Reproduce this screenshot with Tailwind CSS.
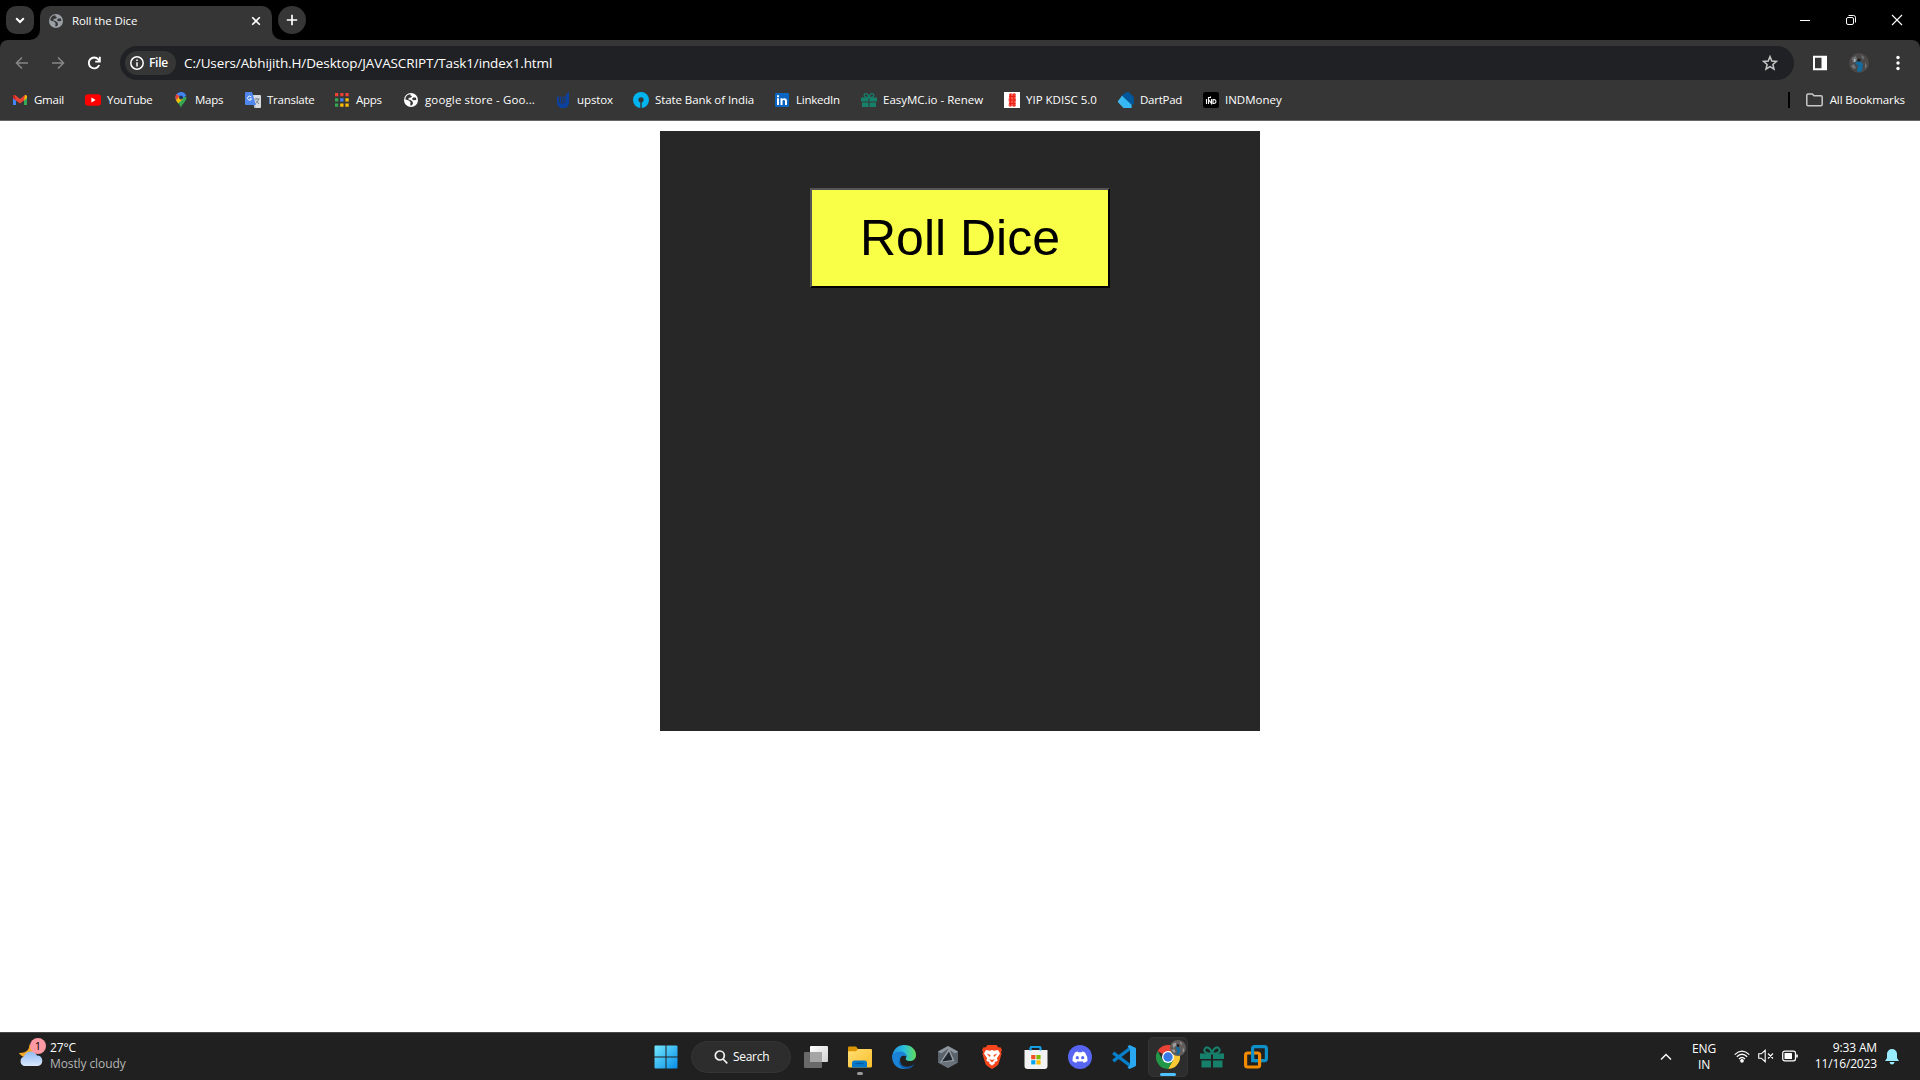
<!DOCTYPE html>
<html lang="en">
<head>
<meta charset="utf-8">
<title>Roll the Dice</title>
<script src="https://cdn.jsdelivr.net/npm/@tailwindcss/browser@4"></script>
</head>
<body class="w-[1920px] h-[1080px] overflow-hidden bg-white flex flex-col font-['Open_Sans','Noto_Sans',sans-serif] text-white whitespace-nowrap">

<!-- Tab strip -->
<header class="h-10 shrink-0 bg-black flex">
  <div class="w-10 pl-1.5 pt-1.5 shrink-0">
    <div class="size-7 rounded-[10px] bg-[#363636] flex items-center justify-center">
      <svg class="size-3" viewBox="0 0 12 12" fill="none" stroke="#fff" stroke-width="2"><path d="M2.2 4.2 6 8l3.800-3.800"/></svg>
    </div>
  </div>
  <div class="relative mt-1.5 w-[232px] h-[34px] bg-[#363636] rounded-t-[10px] flex items-center pb-1 pl-2">
    <svg class="absolute -left-2.5 bottom-0 size-2.5" viewBox="0 0 10 10"><path d="M10 0V10H0A10 10 0 0 0 10 0" fill="#363636"/></svg>
    <svg class="absolute -right-2.5 bottom-0 size-2.5" viewBox="0 0 10 10"><path d="M0 0V10H10A10 10 0 0 1 0 0" fill="#363636"/></svg>
    <svg class="size-4" viewBox="0 0 16 16"><circle cx="8" cy="8" r="7" fill="#9aa0a6"/><path d="M7.500 2.300C4 2.500 2.300 5 2.500 7.500L6 8.500 7.500 10 7.300 13.500 9 13.300 10 11.500 9.500 9.500 7.500 8 5.500 7.500 5.600 6 8 5.500 9 4.200 7.500 3.500ZM10.200 5.500 8.800 7 10.500 8.300 13.400 8 12.800 5.500Z" fill="#363636"/></svg>
    <span class="ml-2 text-[11.500px] tracking-[-0.1px] w-[178px]">Roll the Dice</span>
    <svg class="size-3" viewBox="0 0 12 12" stroke="#fff" stroke-width="1.600"><path d="m2.200 2.200 7.600 7.600m0-7.600L2.200 9.800"/></svg>
  </div>
  <div class="ml-1.5 mt-1.5 size-7 rounded-full bg-[#363636] flex items-center justify-center">
    <svg class="size-3" viewBox="0 0 12 12" stroke="#fff" stroke-width="1.700"><path d="M6 .8v10.400M.8 6h10.400"/></svg>
  </div>
  <div class="ml-auto flex w-[138px]">
    <div class="w-[46px] flex items-center justify-center"><svg class="w-2.5 h-10" viewBox="0 0 10 40" stroke="#fff"><path d="M0 20.500h10"/></svg></div>
    <div class="w-[46px] flex items-center justify-center"><svg class="size-3" viewBox="0 0 12 12" fill="none" stroke="#fff"><rect x="1.500" y="3.500" width="7" height="7" rx="1.500"/><path d="M3.500 1.500h5a2 2 0 0 1 2 2v5"/></svg></div>
    <div class="w-[46px] flex items-center justify-center"><svg class="size-3" viewBox="0 0 12 12" stroke="#fff" stroke-width="1.100"><path d="m1 1 10 10m0-10L1 11"/></svg></div>
  </div>
</header>

<!-- Toolbar and bookmarks -->
<div class="bg-black shrink-0">
<div class="h-[81px] bg-[#363636] rounded-t-[8px] border-b border-[#666] flex flex-col">
  <div class="h-[46px] flex items-center">
    <svg class="ml-[15px] size-3.5" viewBox="0 0 14 14" fill="none" stroke="#868686" stroke-width="1.600"><path d="M13 7H1.800M7 1.500 1.500 7 7 12.500"/></svg>
    <svg class="ml-[22px] size-3.5" viewBox="0 0 14 14" fill="none" stroke="#868686" stroke-width="1.600"><path d="M1 7h11.200M7 1.500 12.500 7 7 12.500"/></svg>
    <svg class="ml-[22px] size-3.5" viewBox="0 0 14 14" fill="none" stroke="#fff" stroke-width="1.900"><path d="M12.200 9A5.400 5.400 0 1 1 11.300 3.400L12.500 5"/><path d="M12.800.8v4.800H8.200" /></svg>
    <div class="ml-[19px] w-[1674px] h-[34px] rounded-full bg-[#202124] flex items-center pl-[5px] pr-4">
      <div class="w-[51px] h-6 rounded-full bg-[#363636] flex items-center pl-[5px]">
        <svg class="size-3.5" viewBox="0 0 14 14" fill="none" stroke="#fff" stroke-width="1.500"><circle cx="7" cy="7" r="6.200"/><path d="M7 6.200v4.200M7 3.500v1.500"/></svg>
        <span class="ml-[5px] text-[12px] font-semibold tracking-[-0.3px]">File</span>
      </div>
      <span class="ml-2 text-[13.500px] tracking-[-0.12px]">C:/Users/Abhijith.H/Desktop/JAVASCRIPT/Task1/index1.html</span>
      <svg class="ml-auto size-4" viewBox="0 0 16 16" fill="none" stroke="#c7c7c7" stroke-width="1.500"><path d="m8 1.600 1.800 4.400 4.700.4-3.600 3.100 1.100 4.600L8 11.600l-4 2.500 1.100-4.600L1.500 6.400 6.200 6Z"/></svg>
    </div>
    <svg class="ml-[19px] w-3.5 h-4" viewBox="0 0 14 16"><path d="M1 1.800h12v12.400H1Z" fill="none" stroke="#fff" stroke-width="2"/><path d="M8.500 1h5v14h-5Z" fill="#fff"/></svg>
    <svg class="ml-[22px] size-5" viewBox="0 0 20 20"><circle cx="10" cy="10" r="10" fill="#4b4847"/><path d="M3 5 7 3l1 4-4 3Zm9-3 3 2-1 3Zm-7 9 2 4-2 1-3-3Zm11-2 2 4-2 3Z" fill="#70767a"/><path d="m7 9 4-1 3 3-1 7-3 1-2-1 1-6-3-1Z" fill="#146a9d"/><circle cx="10" cy="7" r="1.600" fill="#1c1a1d"/><path d="M5 6h1.500v3H5Z" fill="#a8b5bd"/></svg>
    <svg class="ml-[27px] w-1 h-4" viewBox="0 0 4 16" fill="#fff"><circle cx="2" cy="2.500" r="1.700"/><circle cx="2" cy="8" r="1.700"/><circle cx="2" cy="13.500" r="1.700"/></svg>
  </div>
  <nav class="h-[28px] flex items-center pl-3 text-[11.500px] tracking-[-0.25px] leading-4">
    <div class="w-[73px] flex items-center gap-1.5"><svg class="size-4" viewBox="0 0 16 16"><path d="M1 4v9h3V7Z" fill="#4285f4"/><path d="M15 4v9h-3V7Z" fill="#34a853"/><path d="M12 4.500 13 3q2-.5 2 1.500V6l-3 2.500Z" fill="#fbbc04"/><path d="M1 6V4.500Q1 2.500 3 3l5 4 5-4-1 5.500-4 3-4-3Z" fill="#ea4335"/><path d="M1 6V4.500Q1 3 2.500 3L4 8.500Z" fill="#c5221f"/></svg>Gmail</div>
    <div class="w-[88px] flex items-center gap-1.5"><svg class="size-4" viewBox="0 0 16 16"><rect y="2.300" width="16" height="11.500" rx="2.800" fill="#f00"/><path d="m6.400 5.600 4.200 2.400-4.200 2.400Z" fill="#fff"/></svg>YouTube</div>
    <div class="w-[72px] flex items-center gap-1.5"><svg class="size-4" viewBox="0 0 16 16"><path d="M8 16C7.500 12.500 2.500 10 2.500 5.500L13.500 5c0 5-5 7-5.500 11Z" fill="#34a853"/><path d="M8 0a5.500 5.500 0 0 1 5.200 3.800L4.500 10Q2.500 7.500 2.500 5.500A5.500 5.500 0 0 1 8 0Z" fill="#4285f4"/><path d="M3.700 2 7 4.500 3 8.200Q1.500 4.500 3.700 2Z" fill="#ea4335"/><path d="m3 8.200 3.200-3.700L10 7l-4.800 4.200Z" fill="#fbbc04"/><circle cx="8" cy="5.500" r="2" fill="#1b3460"/></svg>Maps</div>
    <div class="w-[89px] flex items-center gap-1.5"><svg class="size-4" viewBox="0 0 16 16"><path d="M6 3h9q1 0 1 1v11q0 1-1 1H9.500Z" fill="#d7dade"/><path d="M1 0h6l4 13H1q-1 0-1-1V1q0-1 1-1Z" fill="#4f87ee"/><path d="M6.200 5A2 2 0 1 0 6.500 6.800H4.700" fill="none" stroke="#fff"/><path d="m9.500 13 1.500 3-2-3Z" fill="#2458b8"/><path d="M9.500 7h5M12 6v1m1.500 0c0 2-2 4-3 4.500m.5-3 3 3.500" fill="none" stroke="#75838b"/></svg>Translate</div>
    <div class="w-[69px] flex items-center gap-1.5"><svg class="size-4" viewBox="0 0 16 16"><path d="M1 1h3.300v3.300H1ZM6.200 1h3.300v3.300H6.200ZM11.400 1h3.300v3.300h-3.300Z" fill="#ea4335"/><path d="M1 6.200h3.300v3.300H1ZM1 11.400h3.300v3.300H1Z" fill="#34a853"/><path d="M6.200 6.200h3.300v3.300H6.200Z" fill="#4285f4"/><path d="M11.400 6.200h3.300v3.300h-3.300ZM6.200 11.400h3.300v3.300H6.200ZM11.400 11.400h3.300v3.300H11.400Z" fill="#fbbc04"/></svg>Apps</div>
    <div class="w-[152px] flex items-center gap-1.5 tracking-[0.13px]"><svg class="size-4" viewBox="0 0 16 16"><circle cx="8" cy="8" r="7" fill="#fff"/><path d="M7.500 2.300C4 2.500 2.300 5 2.500 7.500L6 8.500 7.500 10 7.300 13.500 9 13.300 10 11.500 9.500 9.500 7.500 8 5.500 7.500 5.600 6 8 5.500 9 4.200 7.500 3.500ZM10.200 5.500 8.800 7 10.500 8.300 13.400 8 12.800 5.500Z" fill="#363636"/></svg>google store - Goo...</div>
    <div class="w-[78px] flex items-center gap-1.5 tracking-[-0.1px]"><svg class="size-4" viewBox="0 0 16 16"><path d="M2 4.500h2V10a3.800 3.800 0 0 0 7 0V2l3-2v10.500a6 6 0 0 1-12 0Z" fill="#0d41a0"/><path d="M5.500 4.500V10a2.300 2.300 0 0 0 4.500 0V4M7.800 4.500V10" fill="none" stroke="#0d41a0" stroke-width="1.200"/></svg>upstox</div>
    <div class="w-[141px] flex items-center gap-1.5 tracking-[-0.08px]"><svg class="size-4" viewBox="0 0 16 16"><circle cx="8" cy="8" r="8" fill="#00b5ef"/><circle cx="8" cy="7.800" r="2.600" fill="#363636"/><path d="M7.300 8h1.400v8H7.300Z" fill="#363636"/></svg>State Bank of India</div>
    <div class="w-[87px] flex items-center gap-1.5"><svg class="size-4" viewBox="0 0 16 16"><rect x="1" y="1" width="14" height="14" rx="1" fill="#0a66c2"/><path d="M3 6.300h2V13H3ZM3 3.300h2v1.900H3ZM6.500 6.300h2v.9c1.200-1.700 4.500-1.400 4.500 1.900V13h-2V9.500c0-2-2.500-1.900-2.500 0V13h-2Z" fill="#fff"/></svg>LinkedIn</div>
    <div class="w-[143px] flex items-center gap-1.5 tracking-[0px]"><svg class="size-4" viewBox="0 0 16 16"><path d="M0 5.500h7.500v4H0ZM8.500 5.500H16v4H8.500ZM1 10.500h6.500V15H1ZM8.500 10.500H15V15H8.500Z" fill="#16806a"/><path d="M8 5.500C5 5.800 2.700 4.500 3.200 2.800 4 .8 7 1 8 5.500c1-4.500 4-4.700 4.800-2.700C13.300 4.500 11 5.800 8 5.500Z" fill="none" stroke="#16806a" stroke-width="1.300"/></svg>EasyMC.io - Renew</div>
    <div class="w-[114px] flex items-center gap-1.5 tracking-[0px]"><svg class="size-4" viewBox="0 0 16 16"><path d="M0 0h16v16H0Z" fill="#fff"/><path d="m5 2 2-1 1 1 2-1 2 1-.5 3 .5 3-.5 3 .5 3-2 1-2-1-2 1-1.500-1.500L5 10.500 4.500 8 5 5Z" fill="#f5554a"/><path d="M6.500 2v12M9.800 2v12M5 4.500h6.500M5 8h6.500M5 11.500h6.500" stroke="#ee2016"/></svg>YIP KDISC 5.0</div>
    <div class="w-[85px] flex items-center gap-1.5"><svg class="size-4" viewBox="0 0 16 16"><path d="M4.200 3.500v8L9 16H5.500L0 10.300v-1.300Z" fill="#40b8ef"/><path d="M3.800 3.500 8 .3h3l4.800 4.800v7.400h-2.500Z" fill="#01579b"/><path d="m3.800 3.500 9.800 9.300V16H8l-4.200-4.500Z" fill="#35b9f5"/></svg>DartPad</div>
    <div class="flex items-center gap-1.5 tracking-[0px]"><svg class="size-4" viewBox="0 0 16 16"><rect width="16" height="16" rx="2" fill="#000"/><path d="M3.500 7v5M5.500 12V7.500l3 4V7m1.500.7v3.800h1q2-.2 2-2t-2-2Zm-4.500-1V5.500h2V4.500" stroke="#fff" stroke-width="1.100" fill="none"/></svg>INDMoney</div>
    <div class="ml-auto mr-[15px] flex items-center tracking-[-0.1px]"><div class="w-0.5 h-4 bg-black"></div><svg class="ml-4 mr-[7px] w-[17px] h-3.5" viewBox="0 0 17 14" fill="none" stroke="#c7c7c7" stroke-width="1.500"><path d="M.8 11.500V2.300Q.8 1 2 1h4.300L8 2.800h7q1.200 0 1.200 1.200v7.600q0 1.200-1.200 1.200H2Q.8 12.800.8 11.500Z"/></svg>All Bookmarks</div>
  </nav>
</div>
</div>

<!-- Page content -->
<main class="flex-1 pt-2.5 flex justify-center items-start">
  <div class="size-[600px] bg-[#282728] pt-[57px] flex justify-center items-start">
    <button class="w-[300px] h-[100px] bg-[#f9ff46] border-2 border-t-[#555] border-l-[#555] border-b-black border-r-black text-black text-[50px] font-['Liberation_Sans',Arial,sans-serif]">Roll Dice</button>
  </div>
</main>

<!-- Taskbar -->
<footer class="h-12 shrink-0 bg-[#202020] border-t border-[#484848] grid grid-cols-[645px_1fr_260px] items-center">
  <div class="flex items-center pl-[18px]">
    <div class="relative size-7 -mt-1">
      <svg class="size-7" viewBox="0 0 28 28"><defs><linearGradient id="cloud" x2="0" y2="1"><stop stop-color="#8ebaf3"/><stop offset="1" stop-color="#dce9fc"/></linearGradient></defs><path d="M11 3c1 4-1 9-10 9 2 5 13 7 16 0Z" fill="#f5a623"/><path d="M6 25a5 5 0 0 1 0-9.500 7 7 0 0 1 13-1A5.300 5.300 0 0 1 20 25Z" fill="url(#cloud)"/></svg>
      <span class="absolute left-3 -top-[3px] size-4 rounded-full bg-[#ff99a4] text-black text-[11px] leading-4 text-center">1</span>
    </div>
    <div class="ml-1 -mt-0.5 text-[12px] leading-4 tracking-[-0.1px]"><div>27°C</div><div class="text-[#b5b5b5]">Mostly cloudy</div></div>
  </div>

  <div class="flex items-center">
    <div class="w-10 pl-px flex justify-center"><svg class="size-6" viewBox="0 0 24 24"><defs><linearGradient id="win" x2="1" y2="1"><stop stop-color="#73e8ff"/><stop offset="1" stop-color="#078de8"/></linearGradient></defs><path d="M.5 1.500q0-1 1-1h10v11H.5ZM12.500.5h10q1 0 1 1v10h-11ZM.5 12.500h11v11h-10q-1 0-1-1ZM12.500 12.500h11v10q0 1-1 1h-10Z" fill="url(#win)"/></svg></div>
    <div class="ml-1.5 mr-[5px] w-[100px] h-8 rounded-full bg-[#2d2d2d] border border-[#343434] flex items-center pl-[22px] text-[12px] tracking-[-0.3px]"><svg class="size-3.5 mr-[5px]" viewBox="0 0 14 14" fill="none" stroke="#f2f2f2" stroke-width="1.700"><circle cx="5.800" cy="5.500" r="4.500"/><path d="m9 9 4.300 4.300"/></svg>Search</div>
    <div class="flex gap-1">
      <div class="w-10 h-10 flex items-center justify-center"><svg class="size-6" viewBox="0 0 24 24"><defs><linearGradient id="tv" x2="1" y2="1"><stop stop-color="#fff"/><stop offset="1" stop-color="#d2d2d2"/></linearGradient></defs><rect x="6" y="1" width="18" height="16" rx="1" fill="url(#tv)"/><rect y="7" width="18" height="16" rx="1" fill="#777" fill-opacity=".85"/><path d="M6 7h12v10H6Z" fill="#a5a5a5"/></svg></div>
      <div class="relative w-10 h-10 flex items-center justify-center"><svg class="size-6" viewBox="0 0 24 24"><defs><linearGradient id="folder" x2="1" y2="1"><stop stop-color="#ffdf72"/><stop offset="1" stop-color="#fdbf2d"/></linearGradient></defs><path d="M0 2.500Q0 1.500 1 1.500h7l2.500 3V9H0Z" fill="#d99506"/><path d="M0 7q0-.8 1-.8h7L10 4h13q1 0 1 1v16q0 1.500-1.500 1.500h-21Q0 22.500 0 21Z" fill="url(#folder)"/><path d="M4 22.500V18q0-2.500 2.500-2.500h10Q19 15.500 19 18v4.500Z" fill="#0878cb"/><path d="M7.500 18.500h8" stroke="#075a9d" stroke-width="1.300"/></svg><span class="absolute bottom-0.5 left-[17px] w-1.5 h-[3px] rounded-full bg-[#999]"></span></div>
      <div class="w-10 h-10 flex items-center justify-center"><svg class="size-6" viewBox="0 0 24 24"><defs><linearGradient id="edge" x2="1"><stop stop-color="#238cdc"/><stop offset=".5" stop-color="#29c0df"/><stop offset="1" stop-color="#62dc58"/></linearGradient></defs><path d="M0 12C1 4 6 0 12 0c8 0 12 5 12 10 0 4-3 6-6 6-3.500 0-5-1.500-4-3 1.500-2-.5-5-4-5C5 8 1 10 0 12Z" fill="url(#edge)"/><path d="M0 12c0-3 4-5.500 8.500-5.500 3.500 0 6.500 2.500 6 5.500C12 9.500 8 11 8 15c0 5 4 9 8 8-8 3.500-16-3-16-11Z" fill="#1b83d7"/><path d="M10 10c-5 3-3 10 3 11.500 4 .8 8-.5 9.500-3-2.500 5-6 5.500-9 5.500C7 23 4 14 10 10Z" fill="#105ca8"/></svg></div>
      <div class="w-10 h-10 flex items-center justify-center"><svg class="size-6" viewBox="0 0 24 24"><path d="m12 1 10 5.500v11L12 23 2 17.500v-11Z" fill="#59616a"/><path d="m12 1 10 5.500-3 2L12 4 5 8.500l-3-2Z" fill="#8d959e"/><path d="m2 17.500 3-2 14 1 3 1L12 23Z" fill="#6a727b"/><path d="m13 3.500 5.500 12.500L4 17.500Z" fill="#9aa1a9"/><path d="m13 6.500 3.500 8.500-10.500 1.500Z" fill="#20262d"/></svg></div>
      <div class="w-10 h-10 flex items-center justify-center"><svg class="size-6" viewBox="0 0 24 24"><path d="M7.500 0h9l2 2.500 2-.3L22 5l-1 2 .5 2-3 10q-1 2-6.500 5-5.500-3-6.500-5l-3-10L3 7 2 5l1.500-2.800 2 .3Z" fill="#f6461d"/><path d="m6 5 4 .7L12 5l2 .7 4-.7 2 3.500-3 4.500.5 3-3 1 .5 1.300-3 2.200L9 18.300 9.500 17l-3-1 .5-3-3-4.500Z" fill="#fff"/><path d="m6.500 8.500 4 1.500-.5 2ZM17.500 8.500l-4 1.500.5 2ZM9 14l3 1 3-1-3 3.500Z" fill="#f6461d"/></svg></div>
      <div class="w-10 h-10 flex items-center justify-center"><svg class="size-6" viewBox="0 0 24 24"><path d="M6.500 6V3q0-1.200 1.200-1.200h7.600q1.200 0 1.200 1.200v3" fill="none" stroke="#16a0e8" stroke-width="1.800"/><path d="M.5 5h23v16q0 3-3 3h-17q-3 0-3-3Z" fill="#f2f2f2"/><path d="M7.200 10h4.200v4.200H7.200Z" fill="#f25022"/><path d="M12.400 10h4.200v4.200h-4.200Z" fill="#7fba00"/><path d="M7.200 15.200h4.200v4.200H7.200Z" fill="#00a4ef"/><path d="M12.400 15.200h4.200v4.200h-4.200Z" fill="#ffb900"/><path d="M6.500 5.500V3q0-1.200 1.200-1.200h7.600q1.200 0 1.200 1.200v2.500" fill="none" stroke="#16a0e8" stroke-width="1.800"/></svg></div>
      <div class="w-10 h-10 flex items-center justify-center"><svg class="size-6" viewBox="0 0 24 24"><circle cx="12" cy="12" r="12" fill="#5865f2"/><path d="M7 7.500q2-1 3-1l.5 1q1.500-.3 3 0l.5-1q1 0 3 1 2.800 4 2.500 8.500-2 1.500-4 1.700l-.8-1.400q-2.700.6-5.400 0l-.8 1.400q-2-.2-4-1.700-.3-4.500 2.500-8.500Z" fill="#fff"/><circle cx="9.300" cy="12.700" r="1.600" fill="#5865f2"/><circle cx="14.700" cy="12.700" r="1.600" fill="#5865f2"/></svg></div>
      <div class="w-10 h-10 flex items-center justify-center"><svg class="size-6" viewBox="0 0 24 24"><path d="M1.200 7.800 18 20.500M1.200 16.200 18 3.500" stroke="#087fc9" stroke-width="3.400"/><path d="m17.500 0 6 2.800q.5.300.5 1v16.400q0 .7-.5 1L17.500 24l-2-1.500L18 20V4l-2.500-2.500Z" fill="#2aa7f1"/></svg></div>
      <div class="relative w-10 h-10 rounded-[5px] bg-[#2d2d2d] border border-[#343434] flex items-center justify-center">
        <svg class="size-6" viewBox="0 0 24 24"><path d="M12 12 1.600 6A12 12 0 0 1 22.400 6Z" fill="#ea4335"/><path d="M12 12V0A12 12 0 0 1 22.400 6H12Z" fill="#ea4335"/><path d="M22.400 6A12 12 0 0 1 12 24l5.200-9L12 6Z" fill="#fcc934"/><path d="M1.600 6A12 12 0 0 0 12 24l5.200-9-10.400 0Z" fill="#239748"/><circle cx="12" cy="12" r="6" fill="#fff"/><circle cx="12" cy="12" r="4.700" fill="#3779e6"/></svg>
        <svg class="absolute left-[21px] top-0.5 size-4" viewBox="0 0 20 20"><circle cx="10" cy="10" r="10" fill="#625d5a"/><path d="M3 5 7 3l1 4-4 3Zm9-3 3 2-1 3Zm-7 9 2 4-2 1-3-3Zm11-2 2 4-2 3Z" fill="#999b9c"/><path d="m7 9 4-1 2 5-2 5H8l1-5Z" fill="#146a9d"/><circle cx="10" cy="7" r="1.600" fill="#1c1a1d"/></svg>
        <span class="absolute left-[11px] bottom-0 w-4 h-[3px] rounded-full bg-[#4cc2ff]"></span>
      </div>
      <div class="w-10 h-10 flex items-center justify-center"><svg class="size-6" viewBox="0 0 24 24"><path d="M0 8.500h11V14H0ZM13 8.500h11V14H13ZM1.500 15.500H11v7H1.500ZM13 15.500h9.500v7H13Z" fill="#16806a"/><path d="M12 8.500C7 9 3.500 7 4.500 4.300 6 1 10.500 2 12 8.500 13.500 2 18 1 19.500 4.300 20.500 7 17 9 12 8.500Z" fill="none" stroke="#16806a" stroke-width="2"/></svg></div>
      <div class="w-10 h-10 flex items-center justify-center"><svg class="size-6" viewBox="0 0 24 24" fill="none" stroke-width="3.200"><rect x="8.600" y="1.600" width="13.800" height="14" rx="2" stroke="#0d91c8"/><rect x="1.600" y="8" width="14" height="14" rx="2" stroke="#f38b00"/><path d="M8.600 6v9.600H14" stroke="#0d91c8"/></svg></div>
    </div>
  </div>

  <div class="flex items-center text-[12px] leading-4 tracking-[-0.15px]">
    <svg class="w-3 h-2 mr-5" viewBox="0 0 12 8" fill="none" stroke="#fff" stroke-width="1.400"><path d="m1 6.500 5-5 5 5"/></svg>
    <div class="w-6 text-center mr-[18px]"><div>ENG</div><div>IN</div></div>
    <svg class="size-4 mr-2 -mt-0.5" viewBox="0 0 16 16" fill="none" stroke="#fff" stroke-width="1.300"><path d="M.7 6.600q7.300-7 14.600 0M2.800 8.800q5.200-5 10.400 0M5 11q3-2.900 6 0"/><circle cx="8" cy="12.800" r="1.200" fill="#fff"/></svg>
    <svg class="size-4 mr-2 -mt-0.5" viewBox="0 0 16 16" fill="none" stroke="#fff" stroke-width="1.100"><path d="M.7 5.800h2.600L7.200 2.300v11.400L3.300 10.200H.7ZM10 5.500l5 5m0-5-5 5"/></svg>
    <svg class="size-4 -mt-0.5" viewBox="0 0 16 16" fill="none" stroke="#fff" stroke-width="1.200"><rect x=".7" y="3.200" width="12.800" height="9.600" rx="2"/><rect x="2.500" y="5" width="7.500" height="6" rx=".5" fill="#fff" stroke="none"/><path d="M15 6.500v3" stroke-width="1.600"/></svg>
    <div class="ml-auto -mt-0.5 text-right"><div>9:33 AM</div><div>11/16/2023</div></div>
    <svg class="w-3.5 h-4 ml-2 mr-[21px]" viewBox="0 0 14 16" fill="#99ebff"><path d="M7 0a5 5 0 0 1 5 5v4l2 3H0l2-3V5a5 5 0 0 1 5-5ZM4.500 13h5q-.5 2.500-2.500 2.500T4.500 13Z"/></svg>
  </div>
</footer>
</body>
</html>
